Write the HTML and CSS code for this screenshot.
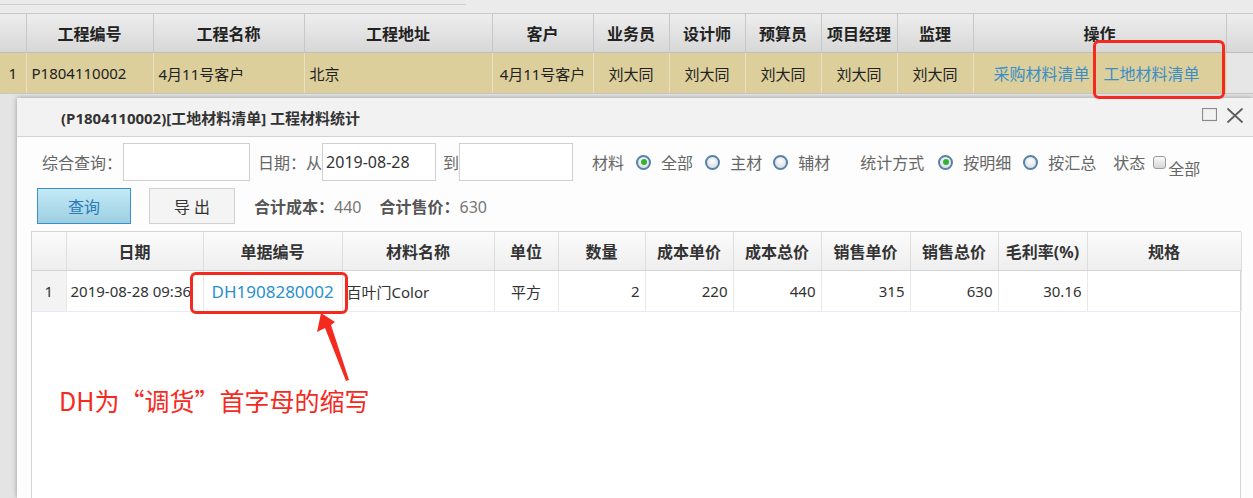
FILE: index.html
```html
<!DOCTYPE html>
<html lang="zh-CN">
<head>
    <meta charset="UTF-8">
    <title>工程材料统计</title>
    <link rel="stylesheet" href="styles.css">
</head>
<body>
    <!-- top project list -->
    <div class="topbar"><div class="topbar-line"></div></div>
    <table class="proj">
        <colgroup>
            <col style="width:26px"><col style="width:127px"><col style="width:151px"><col style="width:188px">
            <col style="width:101px"><col style="width:76px"><col style="width:76px"><col style="width:76px">
            <col style="width:76px"><col style="width:76px"><col style="width:253px"><col style="width:27px">
        </colgroup>
        <thead>
            <tr>
                <th></th><th>工程编号</th><th>工程名称</th><th>工程地址</th><th>客户</th><th>业务员</th>
                <th>设计师</th><th>预算员</th><th>项目经理</th><th>监理</th><th>操作</th><th></th>
            </tr>
        </thead>
        <tbody>
            <tr>
                <td class="c">1</td>
                <td class="l">P1804110002</td>
                <td class="l">4月11号客户</td>
                <td class="l">北京</td>
                <td class="c">4月11号客户</td>
                <td class="c">刘大同</td>
                <td class="c">刘大同</td>
                <td class="c">刘大同</td>
                <td class="c">刘大同</td>
                <td class="c">刘大同</td>
                <td class="ops"><a class="link">采购材料清单</a><a class="link">工地材料清单</a></td>
                <td class="blank"></td>
            </tr>
        </tbody>
    </table>

    <!-- dialog window -->
    <div class="dialog">
        <div class="dlg-title">
            <span class="dlg-caption">(P1804110002)[工地材料清单] 工程材料统计</span>
            <span class="dlg-tools">
                <svg class="tool-max" width="15" height="14" viewBox="0 0 15 14"><rect x="0.5" y="0.5" width="14" height="12" fill="none" stroke="#8a8a8a" stroke-width="1.2"/></svg>
                <svg class="tool-close" width="16" height="15" viewBox="0 0 16 15"><path d="M1 1 L15 14 M15 1 L1 14" fill="none" stroke="#5e5e5e" stroke-width="1.8" stroke-linecap="round"/></svg>
            </span>
        </div>
        <div class="dlg-body">
            <div class="filter-row">
                <span class="lbl">综合查询<span class="colon">：</span></span>
                <span class="inp inp-q"></span>
                <span class="lbl ml8">日期<span class="colon">：</span>从</span>
                <span class="inp inp-d">2019-08-28</span>
                <span class="lbl ml7">到</span>
                <span class="inp inp-d"></span>
                <span class="lbl ml19">材料</span>
                <span class="radio on ml12"></span><span class="lbl ml10">全部</span>
                <span class="radio ml12"></span><span class="lbl ml10">主材</span>
                <span class="radio ml11"></span><span class="lbl ml10">辅材</span>
                <span class="lbl ml30">统计方式</span>
                <span class="radio on ml14"></span><span class="lbl ml10">按明细</span>
                <span class="radio ml12"></span><span class="lbl ml10">按汇总</span>
                <span class="lbl ml17">状态</span>
                <span class="check ml8"></span><span class="lbl low">全部</span>
            </div>
            <div class="action-row">
                <span class="btn btn-query">查询</span>
                <span class="btn btn-export">导 出</span>
                <span class="sum"><b>合计成本<span class="colon">：</span></b>440</span>
                <span class="sum"><b>合计售价<span class="colon">：</span></b>630</span>
            </div>
            <div class="grid">
                <table>
                    <colgroup>
                        <col style="width:34px"><col style="width:137px"><col style="width:139px"><col style="width:152px">
                        <col style="width:64px"><col style="width:87px"><col style="width:88px"><col style="width:88px">
                        <col style="width:89px"><col style="width:88px"><col style="width:89px"><col style="width:154px">
                    </colgroup>
                    <thead>
                        <tr>
                            <th></th><th>日期</th><th>单据编号</th><th>材料名称</th><th>单位</th><th>数量</th>
                            <th>成本单价</th><th>成本总价</th><th>销售单价</th><th>销售总价</th><th>毛利率(%)</th><th>规格</th>
                        </tr>
                    </thead>
                    <tbody>
                        <tr>
                            <td class="num">1</td>
                            <td class="l clip">2019-08-28 09:36</td>
                            <td class="l"><a class="doc">DH1908280002</a></td>
                            <td class="l tight">百叶门Color</td>
                            <td class="c">平方</td>
                            <td class="r">2</td>
                            <td class="r">220</td>
                            <td class="r">440</td>
                            <td class="r">315</td>
                            <td class="r">630</td>
                            <td class="r">30.16</td>
                            <td></td>
                        </tr>
                    </tbody>
                </table>
            </div>
        </div>
    </div>

    <!-- red annotations -->
    <div class="mark mark-op"></div>
    <div class="mark mark-doc"></div>
    <svg class="arrow" width="1253" height="498" viewBox="0 0 1253 498">
        <polygon points="321,313 335,322 331,325 349,380 346,381 325,328 317,332" fill="#f52a1e"/>
    </svg>
    <div class="note">DH为“调货”首字母的缩写</div>
</body>
</html>
```

FILE: styles.css
```css
html, body {
    overflow: hidden;
}
body {
    margin: 0;
    width: 1253px;
    height: 498px;
    position: relative;
    background: #e4e4e4;
    font-family: "Noto Sans", "Noto Sans CJK SC", sans-serif;
    color: #333;
}
.topbar {
    height: 13px;
    background: #ebebeb;
    border-bottom: 1px solid #c9c9c9;
}
.topbar-line {
    width: 466px;
    height: 4px;
    border-bottom: 1px solid #cfcfcf;
}

/* project table */
.proj {
    border-collapse: collapse;
    table-layout: fixed;
    width: 1253px;
}
.proj th {
    height: 38px;
    padding: 0;
    font-size: 16px;
    font-weight: bold;
    color: #222;
    background: linear-gradient(#ededed, #d7d7d7);
    border-right: 1px solid #c8c8c8;
    border-bottom: 1px solid #bdbdbd;
}
.proj td {
    height: 40px;
    padding: 0;
    font-size: 15px;
    color: #222;
    background: #dccf9c;
    border-right: 1px solid #e6e0c6;
    border-bottom: 1px solid #c8c8c8;
    white-space: nowrap;
}
.proj td.l { padding-left: 5px; }
.proj td.c { text-align: center; }
.proj td.blank { background: #e6e6e6; }
.proj td.ops { padding-left: 20px; }
.link {
    color: #3b8ec5;
    font-size: 16px;
    margin-right: 14px;
}

/* dialog */
.dialog {
    position: absolute;
    left: 17px;
    top: 98px;
    width: 1236px;
    height: 400px;
    overflow: hidden;
    background: #fdfdfd;
    box-shadow: 0 0 5px rgba(0, 0, 0, 0.35);
}
.dlg-title {
    height: 38px;
    background: #f2f2f2;
    border-bottom: 1px solid #d2d2d2;
    display: flex;
    align-items: center;
}
.dlg-caption {
    padding-left: 44px;
    font-size: 15px;
    font-weight: bold;
    color: #333;
    flex: 1;
}
.dlg-tools {
    display: flex;
    align-items: center;
    padding-right: 10px;
    padding-bottom: 4px;
}
.tool-close { margin-left: 10px; }
.dlg-body {
    padding: 6px 0 0 14px;
}
.filter-row {
    height: 38px;
    display: flex;
    align-items: center;
    padding-left: 11px;
}
.lbl {
    font-family: "Noto Sans CJK SC", sans-serif;
    font-size: 16px;
    color: #666;
    white-space: nowrap;
}
.colon {
    font-family: "Noto Sans CJK TC", sans-serif;
}
.lbl.low {
    margin-left: 2px;
    padding-top: 12px;
}
.inp {
    box-sizing: border-box;
    height: 38px;
    border: 1px solid #cfcfcf;
    background: #fff;
    font-size: 16px;
    color: #333;
    line-height: 36px;
    padding-left: 3px;
}
.inp-q { width: 127px; margin-left: 1px; }
.inp-d { width: 114px; }
.radio {
    box-sizing: border-box;
    width: 15px;
    height: 15px;
    border-radius: 50%;
    border: 2px solid #5682ae;
    background: radial-gradient(circle at 50% 35%, #ffffff, #d2d2d2);
    position: relative;
}
.radio.on::after {
    content: "";
    position: absolute;
    left: 2.5px;
    top: 2.5px;
    width: 6px;
    height: 6px;
    border-radius: 50%;
    background: #30b236;
}
.check {
    box-sizing: border-box;
    width: 13px;
    height: 13px;
    border: 1px solid #9a9a9a;
    border-radius: 3px;
    background: linear-gradient(#fafafa, #d6d6d6);
}
.ml7 { margin-left: 7px; }
.ml8 { margin-left: 8px; }
.ml10 { margin-left: 10px; }
.ml11 { margin-left: 11px; }
.ml12 { margin-left: 12px; }
.ml14 { margin-left: 14px; }
.ml17 { margin-left: 17px; }
.ml19 { margin-left: 19px; }
.ml30 { margin-left: 30px; }

.action-row {
    margin-top: 7px;
    height: 36px;
    display: flex;
    align-items: center;
    padding-left: 6px;
}
.btn {
    box-sizing: border-box;
    height: 36px;
    display: flex;
    align-items: center;
    justify-content: center;
    font-size: 16px;
}
.btn-query {
    width: 94px;
    background: linear-gradient(#c4e9f7, #9ccfe1);
    border: 1px solid #3a90c8;
    color: #2c7cb9;
}
.btn-export {
    width: 86px;
    margin-left: 18px;
    background: #f4f4f4;
    border: 1px solid #d2d2d2;
    color: #333;
    white-space: pre;
}
.sum {
    margin-left: 19px;
    font-size: 16px;
    color: #777;
}
.sum + .sum { margin-left: 18px; }
.sum b {
    color: #555;
    font-family: "Noto Sans CJK SC", sans-serif;
}

/* detail grid */
.grid {
    margin-top: 7px;
    width: 1208px;
    height: 300px;
    border: 1px solid #d6d6d6;
    background: #fff;
}
.grid table {
    border-collapse: collapse;
    table-layout: fixed;
    width: 1209px;
}
.grid th {
    height: 38px;
    padding: 0;
    font-size: 16px;
    font-weight: bold;
    color: #333;
    background: linear-gradient(#fbfbfb, #eeeeee);
    border-right: 1px solid #dedede;
    border-bottom: 1px solid #d4d4d4;
}
.grid td {
    height: 40px;
    padding: 0 5px;
    font-size: 15px;
    color: #333;
    border-right: 1px solid #e8e8e8;
    border-bottom: 1px solid #e4ebf6;
    white-space: nowrap;
    overflow: hidden;
}
.grid td.num {
    background: #f3f3f3;
    text-align: center;
}
.grid td.clip { padding-left: 4px; text-overflow: clip; }
.grid td.tight { padding-left: 4px; }
.grid td.c { text-align: center; }
.grid td.r { text-align: right; }
.doc {
    color: #2a8fcc;
    font-size: 17px;
    padding-left: 3px;
}

/* red annotations */
.mark {
    position: absolute;
    box-sizing: border-box;
    border: 3px solid #f52a1e;
    border-radius: 6px;
}
.mark-op {
    left: 1093px;
    top: 40px;
    width: 132px;
    height: 59px;
}
.mark-doc {
    left: 190px;
    top: 272px;
    width: 158px;
    height: 42px;
}
.arrow {
    position: absolute;
    left: 0;
    top: 0;
}
.note {
    position: absolute;
    left: 59px;
    top: 382px;
    font-size: 25px;
    color: #f52a1e;
    font-family: "Noto Sans CJK SC", sans-serif;
    white-space: nowrap;
}
```
